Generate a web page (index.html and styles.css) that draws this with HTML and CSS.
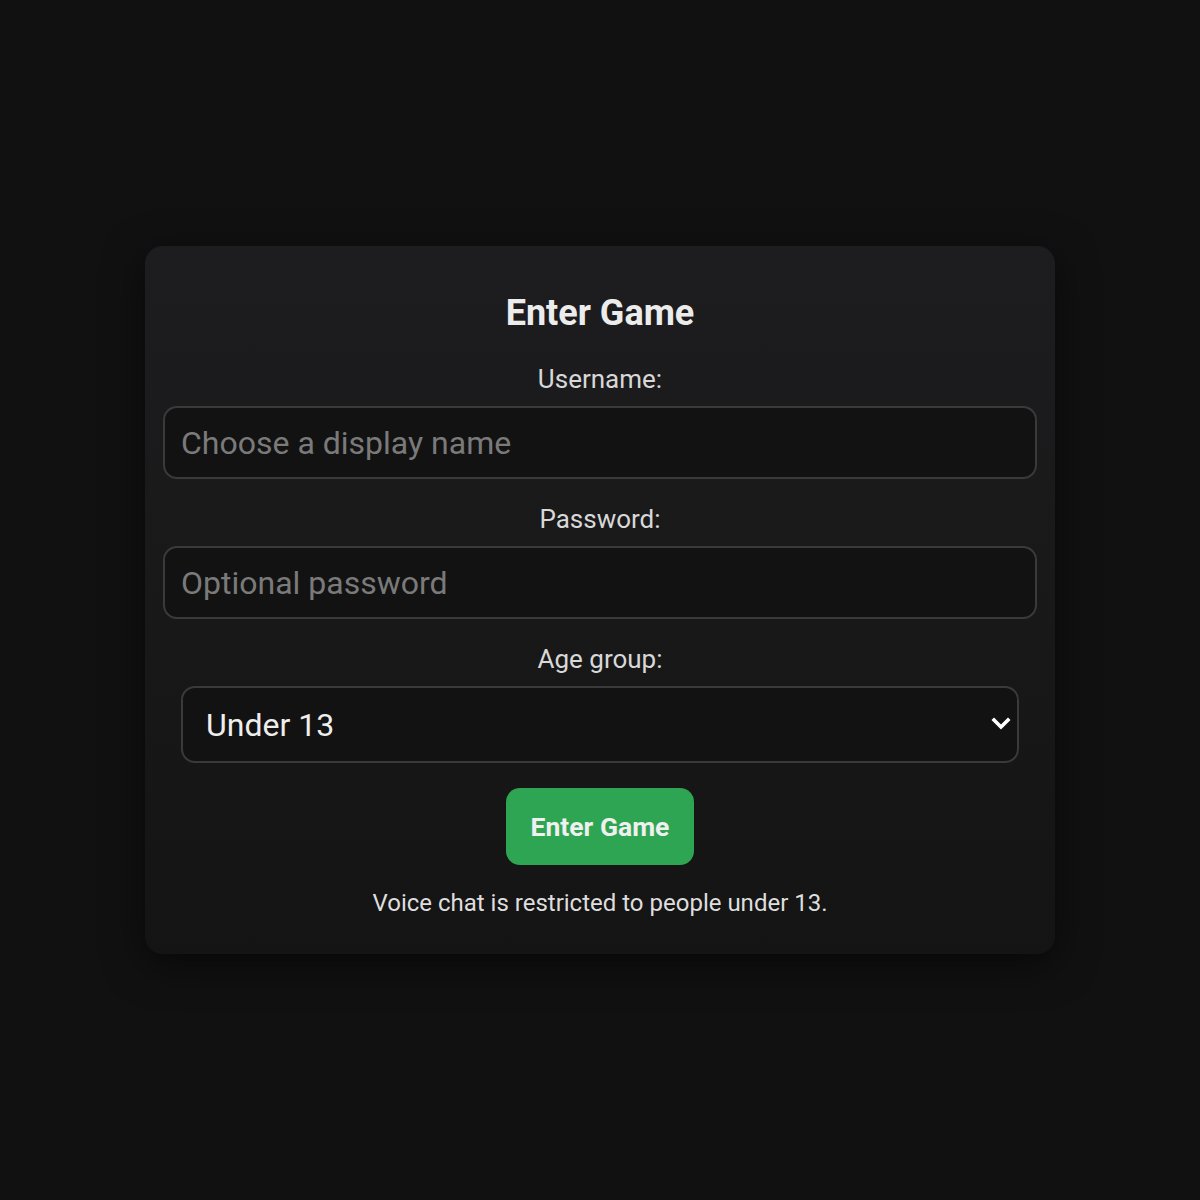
FILE: index.html
```html
<!DOCTYPE html>
<html lang="en">
<head>
<meta charset="utf-8">
<title>Enter Game</title>
<link rel="stylesheet" href="styles.css">
</head>
<body>
<main class="card">
  <h1 class="title">Enter Game</h1>
  <label class="label" for="username">Username:</label>
  <input class="field" id="username" type="text" placeholder="Choose a display name">
  <label class="label" for="password">Password:</label>
  <input class="field" id="password" type="password" placeholder="Optional password">
  <label class="label" for="age">Age group:</label>
  <div class="select-wrap">
    <select class="select" id="age">
      <option>Under 13</option>
      <option>13 or older</option>
    </select>
    <svg class="chevron" width="20" height="14" viewBox="0 0 20 14" aria-hidden="true">
      <polyline points="3,3 10,10 17,3" fill="none" stroke="#ffffff" stroke-width="3.6" stroke-linecap="square" stroke-linejoin="miter"/>
    </svg>
  </div>
  <button class="btn" type="button">Enter Game</button>
  <p class="note">Voice chat is restricted to people under 13.</p>
</main>
</body>
</html>
```
FILE: styles.css
```css
html, body {
  margin: 0;
  height: 100%;
}
body {
  background: #111111;
  color: #e6e6e6;
  font-family: Roboto, "Noto Sans", sans-serif;
  display: flex;
  align-items: center;
  justify-content: center;
  color-scheme: dark;
}
.card {
  width: 910px;
  box-sizing: border-box;
  padding: 24px 18px 37px;
  border-radius: 18px;
  background: linear-gradient(180deg, #1d1d1f 0%, #141414 100%);
  box-shadow: 0 10px 40px rgba(0, 0, 0, 0.55);
  display: flex;
  flex-direction: column;
  align-items: stretch;
  text-align: center;
}
.title {
  margin: 23px 0 33px;
  font-size: 36px;
  line-height: 40px;
  font-weight: 700;
  color: #ececec;
}
.label {
  display: block;
  font-size: 26px;
  line-height: 26px;
  color: #d8d8d8;
  margin-bottom: 14px;
}
.field {
  box-sizing: border-box;
  height: 73px;
  width: 100%;
  margin: 0 0 27px;
  padding: 0 16px;
  border: 2px solid #3a3a3a;
  border-radius: 14px;
  background: #121212;
  color: #eeeeee;
  font-family: inherit;
  font-size: 32px;
  outline: none;
}
.field::placeholder {
  color: #7a7a7a;
}
.select-wrap {
  position: relative;
  margin: 0 18px 25px;
  display: flex;
}
.select {
  flex: 1;
  box-sizing: border-box;
  height: 77px;
  padding: 0 18px 0 23px;
  border: 2px solid #3a3a3a;
  border-radius: 14px;
  background-color: #121212;
  color: #eeeeee;
  font-family: inherit;
  font-size: 32px;
  appearance: none;
  -webkit-appearance: none;
  outline: none;
}
.chevron {
  position: absolute;
  right: 8px;
  top: 31px;
  pointer-events: none;
}
.btn {
  align-self: center;
  width: 188px;
  height: 77px;
  border: none;
  border-radius: 14px;
  background: #2ea552;
  color: #f0f0f0;
  font-family: inherit;
  font-size: 26.5px;
  font-weight: 700;
}
.note {
  margin: 24px 0 0;
  font-size: 24px;
  line-height: 28px;
  color: #dedede;
}
```
